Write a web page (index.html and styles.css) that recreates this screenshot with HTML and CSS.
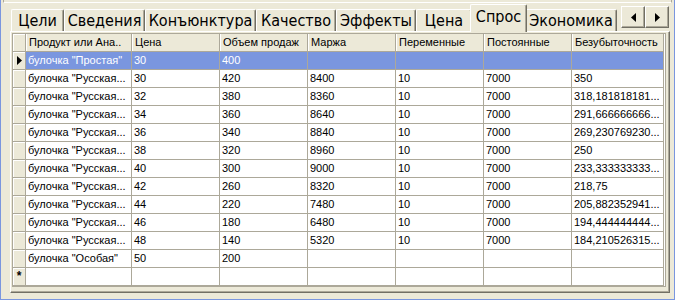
FILE: index.html
```html
<!DOCTYPE html>
<html lang="ru">
<head>
    <meta charset="utf-8">
    <title>Спрос</title>
    <link rel="stylesheet" href="styles.css">
</head>
<body>
    <div class="window">
        <div class="frame-top"></div>
        <div class="tabbar">
            <div class="tabs">
                <div class="tab">Цели</div>
                <div class="tab">Сведения</div>
                <div class="tab">Конъюнктура</div>
                <div class="tab">Качество</div>
                <div class="tab">Эффекты</div>
                <div class="tab">Цена</div>
                <div class="tab active">Спрос</div>
                <div class="tab">Экономика</div>
            </div>
            <div class="scroller">
                <div class="scroll-btn">
                    <svg width="5" height="9" viewBox="0 0 5 9"><polygon points="5,0 5,9 0,4.5" fill="#000"/></svg>
                </div>
                <div class="scroll-btn">
                    <svg width="5" height="9" viewBox="0 0 5 9"><polygon points="0,0 0,9 5,4.5" fill="#000"/></svg>
                </div>
            </div>
        </div>
        <div class="page">
            <div class="grid" id="grid">
                <div class="row head">
                    <div class="cell rowhead"></div>
                    <div class="cell">Продукт или Ана..</div>
                    <div class="cell">Цена</div>
                    <div class="cell">Объем продаж</div>
                    <div class="cell">Маржа</div>
                    <div class="cell">Переменные</div>
                    <div class="cell">Постоянные</div>
                    <div class="cell">Безубыточность</div>
                </div>
                <!-- строки добавляются скриптом -->
            </div>
        </div>
    </div>
    <script>
        const rows = [
            ['булочка "Простая"', '30', '400', '', '', '', ''],
            ['булочка "Русская...', '30', '420', '8400', '10', '7000', '350'],
            ['булочка "Русская...', '32', '380', '8360', '10', '7000', '318,181818181...'],
            ['булочка "Русская...', '34', '360', '8640', '10', '7000', '291,666666666...'],
            ['булочка "Русская...', '36', '340', '8840', '10', '7000', '269,230769230...'],
            ['булочка "Русская...', '38', '320', '8960', '10', '7000', '250'],
            ['булочка "Русская...', '40', '300', '9000', '10', '7000', '233,333333333...'],
            ['булочка "Русская...', '42', '260', '8320', '10', '7000', '218,75'],
            ['булочка "Русская...', '44', '220', '7480', '10', '7000', '205,882352941...'],
            ['булочка "Русская...', '46', '180', '6480', '10', '7000', '194,444444444...'],
            ['булочка "Русская...', '48', '140', '5320', '10', '7000', '184,210526315...'],
            ['булочка "Особая"', '50', '200', '', '', '', ''],
            ['', '', '', '', '', '', '']
        ];

        const grid = document.getElementById('grid');
        rows.forEach((row, i) => {
            const rowDiv = document.createElement('div');
            rowDiv.className = 'row' + (i === 0 ? ' selected' : '');
            let marker = '';
            if (i === 0) {
                marker = '<svg width="5" height="9" viewBox="0 0 5 9"><polygon points="0,0 0,9 5,4.5" fill="#000"/></svg>';
            } else if (i === rows.length - 1) {
                marker = '*';
            }
            rowDiv.innerHTML = `<div class="cell rowhead">${marker}</div>` +
                row.map(value => `<div class="cell">${value}</div>`).join('');
            grid.appendChild(rowDiv);
        });
    </script>
</body>
</html>
```

FILE: styles.css
```css
body {
    margin: 0;
    font-family: "Liberation Sans", Arial, sans-serif;
    background-color: #ece9d8;
}
.window {
    width: 675px;
    height: 300px;
    box-sizing: border-box;
    border: 1px solid #7a96df;
    border-top: none;
    background-color: #ece9d8;
    overflow: hidden;
}
.frame-top {
    height: 2px;
    margin: 0 2px;
    border-left: 1px solid #aca899;
    border-right: 1px solid #aca899;
    border-bottom: 1px solid #fff;
}
.tabbar {
    display: flex;
    align-items: flex-end;
    height: 28px;
    padding-left: 10px;
}
.tabs {
    display: flex;
    align-items: flex-end;
    flex: 1;
}
.tab {
    flex: none;
    height: 22px;
    box-sizing: border-box;
    padding-top: 1px;
    line-height: 20px;
    font-family: "DejaVu Sans Condensed", "DejaVu Sans", sans-serif;
    font-stretch: condensed;
    font-size: 16px;
    text-align: center;
    color: #000;
    white-space: nowrap;
    border-top: 1px solid #fff;
    border-left: 1px solid #fff;
    border-right: 1px solid #716f64;
    border-radius: 2px 2px 0 0;
    box-shadow: inset -1px 0 #aca899;
}
.tab:nth-child(1) { width: 53px; }
.tab:nth-child(2) { width: 81px; }
.tab:nth-child(3) { width: 111px; }
.tab:nth-child(4) { width: 80px; }
.tab:nth-child(5) { width: 80px; }
.tab:nth-child(6) { width: 56px; }
.tab:nth-child(7) { width: 57px; }
.tab:nth-child(8) { width: 92px; }
.tab.active {
    position: relative;
    z-index: 1;
    height: 28px;
    margin: 0 -2px -1px -2px;
    padding: 2px 0 5px 0;
    background-color: #ece9d8;
}
.scroller {
    display: flex;
    align-self: flex-start;
    margin-top: 3px;
    margin-right: 5px;
}
.scroll-btn {
    display: flex;
    align-items: center;
    justify-content: center;
    width: 24px;
    height: 22px;
    box-sizing: border-box;
    border-top: 1px solid #fff;
    border-left: 1px solid #fff;
    border-right: 1px solid #716f64;
    border-bottom: 1px solid #716f64;
    box-shadow: inset -1px -1px #aca899;
}
.page {
    width: 660px;
    height: 262px;
    box-sizing: border-box;
    margin-left: 9px;
    padding: 1px;
    border-top: 1px solid #fff;
    border-left: 1px solid #fff;
    border-right: 1px solid #716f64;
    border-bottom: 1px solid #716f64;
    box-shadow: inset -1px -1px #aca899;
}
.grid {
    width: 654px;
    height: 254px;
    box-sizing: border-box;
    border: 1px solid #aca899;
    background-color: #fff;
    font-size: 11px;
}
.row {
    display: grid;
    grid-template-columns: 13px 106px 88px 88px 88px 88px 88px 92px;
    height: 18px;
}
.cell {
    box-sizing: border-box;
    padding: 0 2px;
    line-height: 17px;
    white-space: nowrap;
    overflow: hidden;
    border-right: 1px solid #aca899;
    border-bottom: 1px solid #aca899;
}
.row.head .cell {
    background-color: #ece9d8;
    box-shadow: inset 1px 0 #fff;
    padding-left: 3px;
}
.row.selected .cell {
    background-color: #7a96df;
    color: #fff;
}
.row .cell.rowhead,
.row.selected .cell.rowhead {
    display: flex;
    align-items: center;
    justify-content: center;
    padding: 0;
    background-color: #ece9d8;
    color: #000;
    font-weight: bold;
    font-size: 12px;
    box-shadow: inset 1px 1px #fff;
}
```
